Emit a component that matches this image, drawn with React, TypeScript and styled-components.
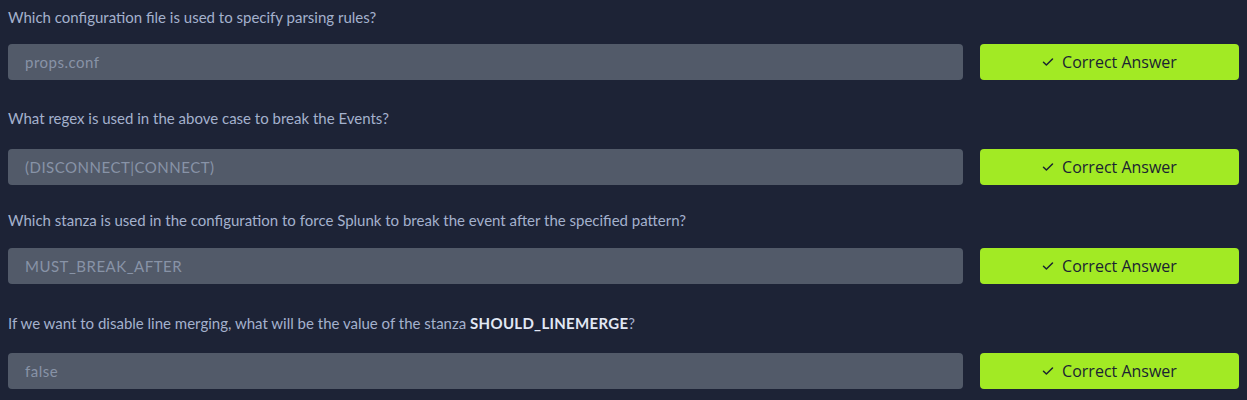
import React from "react";
import styled, { createGlobalStyle } from "styled-components";

const Global = createGlobalStyle`
  html, body { margin: 0; padding: 0; background: #1d2336; }
  body { font-family: "Source Sans Pro", Lato, "Noto Sans", sans-serif; }
`;

const Page = styled.div`
  display: flex;
  flex-direction: column;
  padding: 7px 8px 0 8px;
  background: #1d2336;
  min-height: 400px;
  box-sizing: border-box;
`;

const Block = styled.section<{ $top: number }>`
  display: flex;
  flex-direction: column;
  margin-top: ${(p) => p.$top}px;
`;

const Question = styled.p<{ $gap: number }>`
  margin: 0 0 ${(p) => p.$gap}px 0;
  font-family: Lato, "Noto Sans", sans-serif;
  font-size: 15px;
  line-height: 20px;
  color: #a4b1cd;
  letter-spacing: 0;
  b {
    color: #e2e8f4;
    font-weight: 700;
    letter-spacing: 0.3px;
  }
`;

const Row = styled.div`
  display: grid;
  grid-template-columns: 1fr 259px;
  gap: 17px;
`;

const AnswerField = styled.div`
  height: 36px;
  box-sizing: border-box;
  background: #525a69;
  border-radius: 4px;
  display: flex;
  align-items: center;
  padding: 0 17px;
  font-family: Lato, "Noto Sans", sans-serif;
  font-size: 15px;
  letter-spacing: 0.5px;
  color: #8893a7;
`;

const SubmitButton = styled.button`
  height: 36px;
  border: none;
  border-radius: 4px;
  background: #a2ea24;
  color: #1a2332;
  display: flex;
  align-items: center;
  justify-content: center;
  gap: 8px;
  font-family: "Open Sans", "Noto Sans", sans-serif;
  font-size: 16px;
  padding: 0;
  cursor: pointer;
`;

const Check = () => (
  <svg width="12" height="10" viewBox="0 0 12 10" fill="none">
    <path d="M1.5 5.2 L4.4 8 L10.5 2" stroke="#1a2332" strokeWidth="1.5" strokeLinecap="round" strokeLinejoin="round" />
  </svg>
);

const items: { q: React.ReactNode; a: string; top: number; gap: number }[] = [
  { q: "Which configuration file is used to specify parsing rules?", a: "props.conf", top: 0, gap: 17 },
  { q: "What regex is used in the above case to break the Events?", a: "(DISCONNECT|CONNECT)", top: 28, gap: 21 },
  {
    q: "Which stanza is used in the configuration to force Splunk to break the event after the specified pattern?",
    a: "MUST_BREAK_AFTER",
    top: 25,
    gap: 18,
  },
  {
    q: (
      <>
        If we want to disable line merging, what will be the value of the stanza <b>SHOULD_LINEMERGE</b>?
      </>
    ),
    a: "false",
    top: 29,
    gap: 20,
  },
];

export default function App() {
  return (
    <>
      <Global />
      <Page>
        {items.map((it, i) => (
          <Block key={i} $top={it.top}>
            <Question $gap={it.gap}>{it.q}</Question>
            <Row>
              <AnswerField>{it.a}</AnswerField>
              <SubmitButton>
                <Check />
                Correct Answer
              </SubmitButton>
            </Row>
          </Block>
        ))}
      </Page>
    </>
  );
}
